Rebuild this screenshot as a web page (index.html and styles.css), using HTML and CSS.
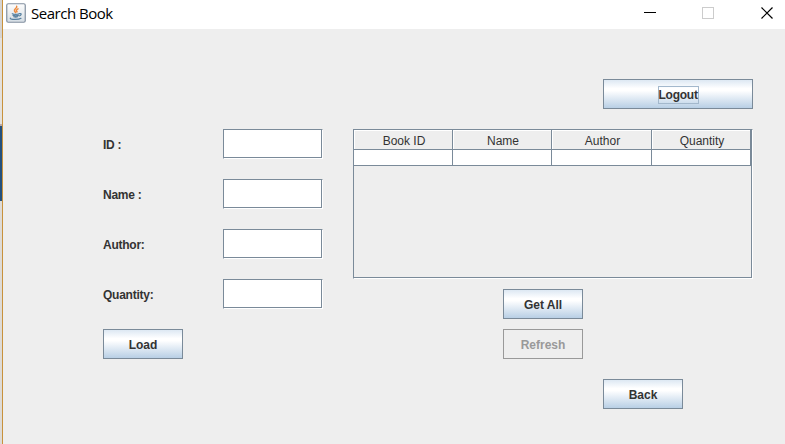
FILE: index.html
```
<!DOCTYPE html>
<html lang="en">
<head>
<meta charset="utf-8">
<title>Search Book</title>
<link rel="stylesheet" href="styles.css">
</head>
<body>
<div class="desktop"></div>
<div class="window">
  <header class="titlebar">
    <svg class="app-icon" width="20" height="20" viewBox="0 0 20 20">
      <defs><linearGradient id="tile" x1="0" y1="0" x2="0" y2="1"><stop offset="0" stop-color="#fdfdfd"/><stop offset="1" stop-color="#d5dde4"/></linearGradient></defs>
      <rect x=".75" y=".75" width="18.5" height="18.5" rx="1.500" fill="url(#tile)" stroke="#8290a0" stroke-width="1.200"/>
      <g fill="none" stroke-linecap="round">
        <path d="M10.700 3.200c.8 2-3.200 2.800-2.200 4.800.3.700.8 1 1.100 1.500M12 5.800c-1.900 1.100-2 1.800-1 3" stroke="#ee8a3c" stroke-width="1.500"/>
        <path d="M6.300 10.700c2 .7 5 .6 6.800 0M6.900 12.300c1.800.6 4 .6 5.600 0M7.700 13.800c1.200.4 2.800.4 4 0M13.700 10.600c2.400-.5 1.600 1.900-.4 2.400" stroke="#557f9f" stroke-width="1.200"/>
        <path d="M4.300 15.200c-.4 1.500 8.500 1.600 10.700.1" stroke="#557f9f" stroke-width="1.200"/>
      </g>
    </svg>
    <h1 class="title">Search Book</h1>
    <svg class="controls" width="132" height="14" viewBox="0 0 132 14" fill="none" shape-rendering="crispEdges">
      <path d="M0 6.500h12" stroke="#000"/>
      <rect x="58.500" y="1.500" width="11" height="11" stroke="#ccc"/>
      <path d="M117.500 1.500l11 11M128.500 1.500l-11 11" stroke="#000" stroke-width="1.200" shape-rendering="auto"/>
    </svg>
  </header>
  <main class="content">
    <form class="book-form">
      <label class="field"><span>ID :</span><input type="text"></label>
      <label class="field"><span>Name :</span><input type="text"></label>
      <label class="field"><span>Author:</span><input type="text"></label>
      <label class="field"><span>Quantity:</span><input type="text"></label>
      <button type="button" class="button">Load</button>
    </form>
    <section class="results">
      <button type="button" class="button logout"><span class="focus">Logout</span></button>
      <div class="scroll-pane">
        <div class="table">
          <div class="th">Book ID</div><div class="th">Name</div><div class="th">Author</div><div class="th">Quantity</div>
          <div class="td"></div><div class="td"></div><div class="td"></div><div class="td"></div>
        </div>
      </div>
      <button type="button" class="button get-all">Get All</button>
      <button type="button" class="button refresh" disabled>Refresh</button>
      <button type="button" class="button back">Back</button>
    </section>
  </main>
</div>
</body>
</html>
```
FILE: styles.css
```
* { box-sizing: border-box; }
body {
  margin: 0;
  width: 785px;
  height: 444px;
  overflow: hidden;
  display: flex;
  background: #eee;
  color: #333;
  font: bold 12px/14px "Liberation Sans", Arial, sans-serif;
}
.desktop {
  width: 2px;
  background: linear-gradient(#d5d3d1 0 38px, #e4e1dd 38px 124px, #b9a9a9 124px 126px, #24507c 126px 201px, #dedbd7 201px);
}
.window {
  flex: 1;
  border-left: 1px solid #c8923c;
}
.titlebar {
  height: 29px;
  display: flex;
  align-items: center;
  background: #fff;
  padding: 0 9px 3px 3px;
}
.title {
  margin: 0 0 0 5px;
  color: #000;
  font: 15px/20px "Open Sans", "Noto Sans", sans-serif;
  letter-spacing: -.48px;
}
.controls { margin-left: auto; }
.content { display: flex; }
.book-form {
  display: flex;
  flex-direction: column;
  gap: 20px;
  width: 220px;
  margin: 100px 30px 0 100px;
}
.field {
  display: flex;
  align-items: center;
  justify-content: space-between;
}
.field span { padding-top: 2px; letter-spacing: -.25px; }
.field input {
  width: 100px;
  height: 30px;
  border: 1px solid #7a8a99;
  border-right-color: #fff;
  border-bottom-color: #fff;
  box-shadow: inset -1px -1px #7a8a99;
  background: #fff;
  outline: 0;
  padding: 0;
}
.button {
  width: 80px;
  height: 30px;
  padding: 1px 0 0;
  border: 1px solid #7a8a99;
  border-radius: 0;
  background: linear-gradient(#dde8f3, #fff 30%, #fff 38%, #b8cfe5);
  color: #333;
  font: inherit;
}
.button:disabled {
  background: #eee;
  border-color: #999;
  color: #999;
}
.results {
  width: 400px;
  display: flex;
  flex-direction: column;
  padding-top: 50px;
}
.logout { width: 150px; margin: 0 0 20px 250px; }
.focus {
  display: inline-block;
  width: 41px;
  height: 18px;
  line-height: 17px;
  border: 1px solid #a3b8cc;
  white-space: nowrap;
  letter-spacing: -.25px;
}
.scroll-pane {
  height: 150px;
  border: 1px solid #7a8a99;
  border-right-color: #fff;
  border-bottom-color: #fff;
  box-shadow: inset -1px -1px #7a8a99;
}
.table {
  display: grid;
  grid-template-columns: 99px 99px 100px 99px;
  grid-template-rows: 20px 16px;
  width: 397px;
  font-weight: normal;
}
.th {
  padding-left: 2px;
  border-right: 1px solid #7a8a99;
  border-bottom: 1px solid #7a8a99;
  box-shadow: inset 1px 1px #fff;
  text-align: center;
  line-height: 22px;
}
.td {
  background: #fff;
  border-right: 1px solid #7a8a99;
  border-bottom: 1px solid #7a8a99;
}
.get-all { margin: 10px 0 0 150px; }
.refresh { margin: 10px 0 0 150px; }
.back { margin: 20px 0 0 250px; }
```
